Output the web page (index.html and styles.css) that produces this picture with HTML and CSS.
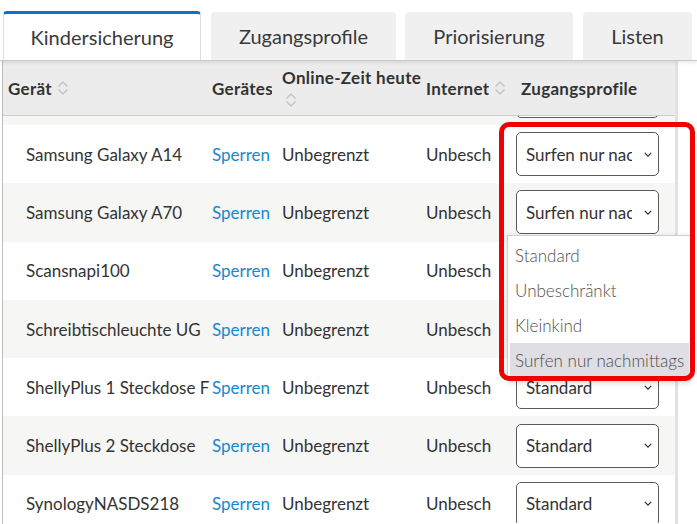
FILE: index.html
```html
<!DOCTYPE html>
<html lang="de">
<head>
<meta charset="utf-8">
<title>Kindersicherung</title>
<link rel="stylesheet" href="styles.css">
</head>
<body>
<div class="page">
  <div class="tabs">
    <div class="tab active">Kindersicherung</div>
    <div class="tab t2">Zugangsprofile</div>
    <div class="tab t3">Priorisierung</div>
    <div class="tab t4">Listen</div>
  </div>
  <div class="table">
    <div class="thead">
      <div class="th c1"><span>Gerät</span><svg class="sort" viewBox="0 0 12 16"><path d="M1.5 6.5 6 2l4.5 4.5M1.5 9.5 6 14l4.5-4.5"/></svg></div>
      <div class="th c2"><span class="clip w60">Gerätestatus</span></div>
      <div class="th c3 two"><span>Online-Zeit heute</span><svg class="sort" viewBox="0 0 12 16"><path d="M1.5 6.5 6 2l4.5 4.5M1.5 9.5 6 14l4.5-4.5"/></svg></div>
      <div class="th c4"><span class="clip w63">Internetnutzung</span><svg class="sort" viewBox="0 0 12 16"><path d="M1.5 6.5 6 2l4.5 4.5M1.5 9.5 6 14l4.5-4.5"/></svg></div>
      <div class="th c5"><span>Zugangsprofile</span></div>
    </div>
    <div class="tbody">
      <div class="row alt partial">
        <div class="td c1">Samsung Galaxy A12</div><div class="td c2 link">Sperren</div><div class="td c3">Unbegrenzt</div><div class="td c4"><span class="clip w66">Unbeschränkt</span></div>
        <div class="td c5"><div class="select"><span>Standard</span><svg class="chev" viewBox="0 0 10 6"><path d="M1 1l4 4 4-4"/></svg></div></div>
      </div>
      <div class="row">
        <div class="td c1">Samsung Galaxy A14</div><div class="td c2 link">Sperren</div><div class="td c3">Unbegrenzt</div><div class="td c4"><span class="clip w66">Unbeschränkt</span></div>
        <div class="td c5"><div class="select"><span>Surfen nur nachmittags</span><svg class="chev" viewBox="0 0 10 6"><path d="M1 1l4 4 4-4"/></svg></div></div>
      </div>
      <div class="row alt">
        <div class="td c1">Samsung Galaxy A70</div><div class="td c2 link">Sperren</div><div class="td c3">Unbegrenzt</div><div class="td c4"><span class="clip w66">Unbeschränkt</span></div>
        <div class="td c5"><div class="select"><span>Surfen nur nachmittags</span><svg class="chev" viewBox="0 0 10 6"><path d="M1 1l4 4 4-4"/></svg></div></div>
      </div>
      <div class="row">
        <div class="td c1">Scansnapi100</div><div class="td c2 link">Sperren</div><div class="td c3">Unbegrenzt</div><div class="td c4"><span class="clip w66">Unbeschränkt</span></div>
        <div class="td c5"><div class="select"><span>Standard</span><svg class="chev" viewBox="0 0 10 6"><path d="M1 1l4 4 4-4"/></svg></div></div>
      </div>
      <div class="row alt">
        <div class="td c1">Schreibtischleuchte UG</div><div class="td c2 link">Sperren</div><div class="td c3">Unbegrenzt</div><div class="td c4"><span class="clip w66">Unbeschränkt</span></div>
        <div class="td c5"><div class="select"><span>Standard</span><svg class="chev" viewBox="0 0 10 6"><path d="M1 1l4 4 4-4"/></svg></div></div>
      </div>
      <div class="row">
        <div class="td c1">ShellyPlus 1 Steckdose Flur</div><div class="td c2 link">Sperren</div><div class="td c3">Unbegrenzt</div><div class="td c4"><span class="clip w66">Unbeschränkt</span></div>
        <div class="td c5"><div class="select"><span>Standard</span><svg class="chev" viewBox="0 0 10 6"><path d="M1 1l4 4 4-4"/></svg></div></div>
      </div>
      <div class="row alt">
        <div class="td c1">ShellyPlus 2 Steckdose</div><div class="td c2 link">Sperren</div><div class="td c3">Unbegrenzt</div><div class="td c4"><span class="clip w66">Unbeschränkt</span></div>
        <div class="td c5"><div class="select"><span>Standard</span><svg class="chev" viewBox="0 0 10 6"><path d="M1 1l4 4 4-4"/></svg></div></div>
      </div>
      <div class="row">
        <div class="td c1">SynologyNASDS218</div><div class="td c2 link">Sperren</div><div class="td c3">Unbegrenzt</div><div class="td c4"><span class="clip w66">Unbeschränkt</span></div>
        <div class="td c5"><div class="select"><span>Standard</span><svg class="chev" viewBox="0 0 10 6"><path d="M1 1l4 4 4-4"/></svg></div></div>
      </div>
    </div>
  </div>
  <ul class="dropdown">
    <li>Standard</li>
    <li>Unbeschränkt</li>
    <li>Kleinkind</li>
    <li class="hover">Surfen nur nachmittags</li>
  </ul>
  <div class="highlight"></div>
</div>
</body>
</html>
```

FILE: styles.css
```css
* { box-sizing: border-box; }
html, body { margin: 0; padding: 0; background: #fff; }
body {
  font-family: Lato, "Liberation Sans", sans-serif;
  color: #333;
  width: 697px;
  height: 524px;
  overflow: hidden;
}
.page { position: relative; width: 697px; height: 524px; overflow: hidden; }

.tabs {
  display: flex;
  align-items: flex-end;
  height: 61px;
  padding: 11px 0 0 3px;
  border-bottom: 1px solid #c9c9c9;
  box-shadow: 0 2px 3px rgba(0,0,0,0.08);
  position: relative;
  z-index: 2;
}
.tab {
  height: 48px;
  display: flex;
  align-items: center;
  justify-content: center;
  font-size: 20px;
  color: #3a3a3a;
  background: #f0f0f0;
  border-radius: 4px 4px 0 0;
}
.tab.active {
  width: 198px;
  height: 49px;
  background: #fff;
  border-top: 3px solid #0a72cc;
  border-left: 1px solid #dcdcdc;
  border-right: 1px solid #dcdcdc;
  padding-bottom: 1px;
}
.t2 { width: 185px; margin-left: 10px; }
.t3 { width: 168px; margin-left: 9px; }
.t4 { width: 109px; margin-left: 10px; }

.table {
  margin-left: 2px;
  width: 676px;
  height: 463px;
  border-left: 1px solid #bdbdbd;
  border-right: 3px solid #e2e2e2;
  position: relative;
}
.thead, .row {
  display: grid;
  grid-template-columns: 207px 70px 144px 92px 160px;
}
.thead {
  height: 55px;
  background: #ececec;
  border-bottom: 1px solid #cfcfcf;
  font-weight: 700;
  font-size: 17px;
  letter-spacing: 0.3px;
  position: relative;
  z-index: 1;
}
.th {
  display: flex;
  align-items: center;
  overflow: hidden;
  white-space: nowrap;
  padding-left: 2px;
}
.th.c1 { padding-left: 5px; }
.th.c5 { padding-left: 5px; }
.th.two {
  flex-direction: column;
  align-items: flex-start;
  justify-content: flex-start;
  padding-top: 6px;
}
.clip { overflow: hidden; display: inline-block; white-space: nowrap; }
.w60 { width: 60px; }
.w63 { width: 63px; }
.w66 { width: 66px; }
.sort {
  width: 12px;
  height: 16px;
  margin-left: 5px;
  flex: none;
}
.two .sort { margin: 4px 0 0 3px; }
.sort path { fill: none; stroke: #bdbdbd; stroke-width: 1.2; }

.tbody { height: 407px; overflow: hidden; }
.row {
  height: 58.3px;
  font-size: 17px;
  background: #fff;
}
.row.alt { background: #f6f6f4; }
.row.partial { margin-top: -49.3px; }
.td {
  display: flex;
  align-items: center;
  white-space: nowrap;
  overflow: hidden;
  padding-left: 2px;
}
.td.c1 { padding-left: 23px; }
.td.c5 { padding-left: 0; }
.link { color: #1788cf; }
.select {
  width: 143px;
  height: 44px;
  border: 1px solid #5a5a5a;
  border-radius: 5px;
  background: #fff;
  display: flex;
  align-items: center;
  padding: 0 7px 0 9px;
}
.select span { width: 106px; margin-right: 10px; overflow: hidden; white-space: nowrap; flex: none; }
.chev { width: 8px; height: 5px; flex: none; margin-left: 2px; }
.chev path { fill: none; stroke: #333; stroke-width: 1.6; }

.dropdown {
  position: absolute;
  left: 507px;
  top: 235px;
  width: 184px;
  margin: 0;
  padding: 2px 1px 2px 2px;
  list-style: none;
  background: #fff;
  border: 1px solid #cfcfcf;
  box-shadow: 0 2px 6px rgba(0,0,0,0.15);
  font-size: 17px;
  font-weight: 300;
  color: #4f4f4f;
  z-index: 3;
}
.dropdown li {
  height: 35px;
  line-height: 35px;
  padding-left: 5px;
  white-space: nowrap;
}
.dropdown li.hover { background: #dedee4; }

.highlight {
  position: absolute;
  left: 499px;
  top: 122px;
  width: 196px;
  height: 259px;
  border: 5px solid #f00000;
  border-radius: 10px;
  z-index: 4;
}
```
